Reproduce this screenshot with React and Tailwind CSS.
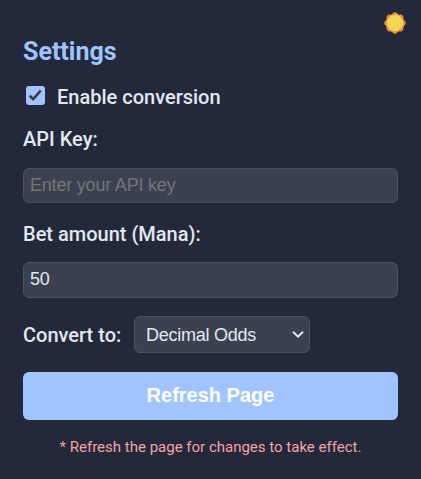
import { useState } from 'react';

const fieldClass =
  "block w-full rounded-[6px] border border-[#4a5160] bg-[#3b4150] px-[6px] font-['Liberation_Sans',Arial,sans-serif] text-[18px] tracking-[-0.2px] text-[#e2e8f0] outline-none placeholder:text-[#757575]";

function SunIcon() {
  const bumps = Array.from({ length: 8 }, (_, i) => i * 45);
  return (
    <svg width="22" height="22" viewBox="0 0 22 22" aria-hidden="true">
      <g fill="#ed8f3c">
        <circle cx="11" cy="11" r="9.5" />
        {bumps.map((angle) => (
          <circle key={angle} cx="11" cy="3" r="2.7" transform={`rotate(${angle} 11 11)`} />
        ))}
      </g>
      <circle cx="11" cy="11" r="8.2" fill="#f2d750" />
    </svg>
  );
}

export default function App() {
  const [enabled, setEnabled] = useState(true);
  return (
    <main className="relative flex h-[479px] w-[421px] flex-col bg-[#23283a] px-[23px] pt-[37px] font-[Roboto,sans-serif] text-[20px] leading-[30px] font-medium text-[#e2e8f0]">
      <button className="absolute top-3 right-[15px]" aria-label="Toggle theme">
        <SunIcon />
      </button>
      <h1 className="text-[25px] leading-[30px] font-bold text-[#a0c4ff]">Settings</h1>
      <label className="mt-[15px] flex h-[30px] items-center">
        <input type="checkbox" className="sr-only" checked={enabled} onChange={(e) => setEnabled(e.target.checked)} />
        <span className="mr-3 ml-[3px] flex size-[19px] -translate-y-[2px] items-center justify-center rounded-[3px] bg-[#a0c4ff]">
          {enabled && (
            <svg width="19" height="19" viewBox="0 0 19 19" fill="none" stroke="#3b3b3b" strokeWidth="2.6">
              <path d="M3.7 9.7 L7.3 13.2 L14.7 4.5" />
            </svg>
          )}
        </span>
        Enable conversion
      </label>
      <label htmlFor="key" className="mt-3">API Key:</label>
      <input id="key" className={`${fieldClass} mt-[14px] h-[35px]`} placeholder="Enter your API key" />
      <label htmlFor="amount" className="mt-4">Bet amount (Mana):</label>
      <input id="amount" className={`${fieldClass} mt-[13px] h-[36px] pb-[2px]`} defaultValue="50" />
      <div className="mt-[18px] flex h-[37px] items-center">
        <label htmlFor="format">Convert to:</label>
        <div className="relative ml-auto mr-[88px] h-[37px] w-[176px]">
          <select
            id="format"
            className="block h-full w-full appearance-none rounded-[6px] border border-[#4a5160] bg-[#3b4150] pl-[11px] font-['Liberation_Sans',Arial,sans-serif] text-[18px] font-normal tracking-[-0.25px] text-[#e2e8f0]"
          >
            <option>Decimal Odds</option>
          </select>
          <svg className="pointer-events-none absolute top-[14px] right-[6px]" width="12" height="9" viewBox="0 0 12 9" fill="none" stroke="#e2e8f0" strokeWidth="2">
            <path d="M1 1.7 L6 6.7 L11 1.7" />
          </svg>
        </div>
      </div>
      <button className="mt-[19px] h-12 rounded-[6px] bg-[#a0c4ff] pb-[2px] font-['Liberation_Sans',Arial,sans-serif] text-[20px] font-bold text-white">
        Refresh Page
      </button>
      <p className="mt-[17px] text-center text-[15px] leading-5 font-normal text-[#f5a3a3]">
        * Refresh the page for changes to take effect.
      </p>
    </main>
  );
}
